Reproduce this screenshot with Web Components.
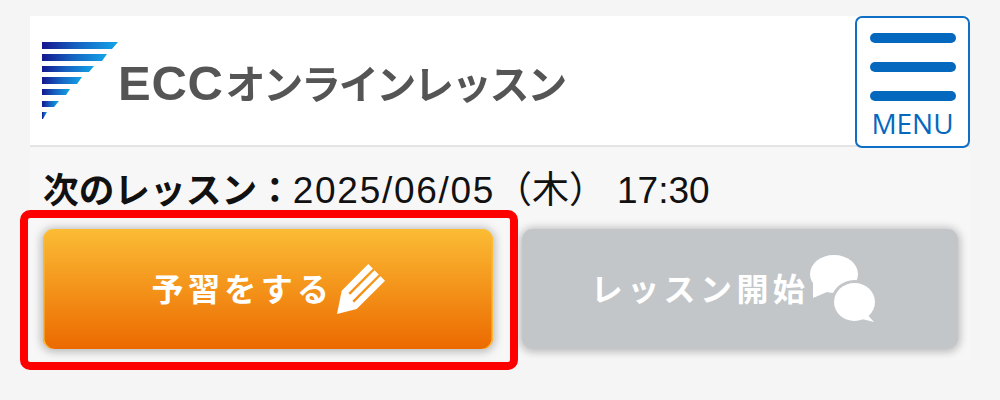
<!DOCTYPE html>
<html lang="ja"><head><meta charset="utf-8"><style>
html,body{margin:0;padding:0;background:#f5f5f5;width:1000px;height:400px;overflow:hidden;font-family:"Liberation Sans","Noto Sans CJK JP",sans-serif}
</style></head><body>
<lesson-page></lesson-page>
<template id="t-page"><style>
:host{display:block;position:relative;width:1000px;height:400px;box-sizing:border-box;padding:16px 30px 0}
.panel{background:#f7f7f7;height:344px}
.next{display:block;margin:24px 0 0 13px}
.btns{display:flex;margin:18px 12px 0 13px;gap:29px}
.mark{position:absolute;left:20px;top:210px;width:498px;height:160px;box-sizing:border-box;border:8px solid #f00;border-radius:10px}
</style><div class="panel"><site-header></site-header>
<next-lesson class="next"></next-lesson>
<div class="btns">
<action-button style="--w:450px;--a:#fbbc34;--b:#ec6a00;--edge:#fbbc34;--gap:3px;--pr:0px" label="予習をする"><svg slot="icon" width="48" height="50" viewBox="0 0 48 50"><defs><mask id="pm" maskUnits="userSpaceOnUse" x="0" y="0" width="48" height="50"><polygon fill="#fff" points="4.7,26.7 31.3,0 48,16.7 19.7,45 0,50"/><path stroke="#000" stroke-width="2.4" fill="none" d="M12.3 29.8L42 .1M16.3 37.6L50 3.9"/></mask></defs><rect width="48" height="50" fill="#fff" mask="url(#pm)"/></svg></action-button>
<action-button style="--w:436px;--a:#c3c6c9;--b:#c3c6c9;--edge:#c3c6c9;--gap:1px;--pr:13px" label="レッスン開始"><svg slot="icon" width="66" height="68" viewBox="0 0 66 68"><ellipse cx="24" cy="19" rx="24" ry="19" fill="#fff"/><path fill="#fff" d="M3 24L3 43L24 34Z"/><ellipse cx="44.5" cy="47" rx="23.5" ry="22" fill="#c3c6c9"/><ellipse cx="44.5" cy="47" rx="20.5" ry="19" fill="#fff"/><path fill="#fff" d="M56 58L64 67L52 64Z"/></svg></action-button>
</div></div><div class="mark"></div></template>
<template id="t-header"><style>
:host{display:flex;align-items:flex-start;height:131px;box-sizing:border-box;background:#fff;border-bottom:2px solid #e4e4e4;position:relative}
.logo{display:flex;align-items:flex-start;margin:26px 0 0 12px;filter:blur(.5px)}
.name{font:700 40px/44px "Noto Sans CJK JP",sans-serif;color:#555;letter-spacing:-2.3px;margin:18px 0 0 -2px;white-space:nowrap;display:flex;align-items:center}
.ecc{font:700 49px/44px "Liberation Sans",sans-serif;letter-spacing:.7px;margin-right:2px;position:relative;top:1px}
menu-button{position:absolute;right:0;top:0}
</style><div class="logo"><svg width="78" height="78" viewBox="0 0 78 78"><defs><linearGradient id="g"><stop offset="0" stop-color="#15178f"/><stop offset=".45" stop-color="#1660bf"/><stop offset="1" stop-color="#12a5e8"/></linearGradient></defs><g fill="url(#g)"><path d="M0 0H76L70 7H0Z"/><path d="M0 12H65L60 19H0Z"/><path d="M0 24H52L47 30H0Z"/><path d="M0 35H40L35 42H0Z"/><path d="M0 47H28L24 53H0Z"/><path d="M0 59H17L12 65H0Z"/><path d="M0 70H5L1 77H0Z"/></g></svg><div class="name"><span class="ecc">ECC</span><span>オンラインレッスン</span></div></div><menu-button></menu-button></template>
<template id="t-menu"><style>
:host{display:flex;flex-direction:column;align-items:center;box-sizing:border-box;width:115px;height:132px;background:#fff;border:2px solid #0e6fc4;border-radius:7px;padding:15px 0 0}
i{display:block;width:86px;height:10px;border-radius:5px;background:#0568bf;margin-bottom:19px}
i:nth-of-type(3){margin-bottom:0}
span{font:28px/1 "Open Sans","Liberation Sans",sans-serif;color:#0568bf;margin-top:8px}
</style><i></i><i></i><i></i><span>MENU</span></template>
<template id="t-next"><style>
:host{font:37px/40px "Liberation Sans","Noto Sans CJK JP",sans-serif;color:#111;white-space:nowrap;height:40px;overflow:visible}
b{font-weight:700;font-size:35.7px}
.d{letter-spacing:1.7px}
.t{margin-left:11px}
</style><b>次のレッスン：</b><span class="d">2025/06/05</span><span>（木）</span><span class="t">17:30</span></template>
<template id="t-btn"><style>
:host{display:flex;align-items:center;justify-content:center;gap:var(--gap);box-sizing:border-box;width:var(--w);height:120px;padding-right:var(--pr);border-radius:11px;background:linear-gradient(var(--a),var(--b));box-shadow:inset 1.5px 0 0 var(--edge),inset -1.5px 0 0 var(--edge),0 1px 9px 2px rgba(0,0,0,.25)}
span{font:700 32px/1 "Noto Sans CJK JP",sans-serif;color:#fff;letter-spacing:4.4px;white-space:nowrap;margin-top:-5px}
</style><span id="l"></span><slot name="icon"></slot></template>
<script>
function def(tag,id,extra){customElements.define(tag,class extends HTMLElement{constructor(){super();this.attachShadow({mode:'open'}).appendChild(document.getElementById(id).content.cloneNode(true));}connectedCallback(){if(extra)extra(this);}});}
def('menu-button','t-menu');def('site-header','t-header');def('next-lesson','t-next');
def('action-button','t-btn',e=>{e.shadowRoot.getElementById('l').textContent=e.getAttribute('label');});
def('lesson-page','t-page');
</script></body></html>
